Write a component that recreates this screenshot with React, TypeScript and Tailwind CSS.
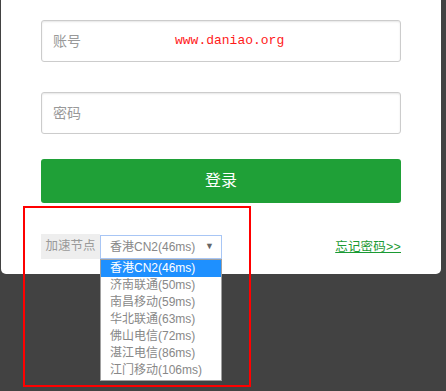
const nodes = [
  '香港CN2(46ms)',
  '济南联通(50ms)',
  '南昌移动(59ms)',
  '华北联通(63ms)',
  '佛山电信(72ms)',
  '湛江电信(86ms)',
  '江门移动(106ms)',
];

const font = { fontFamily: '"Liberation Sans", "Noto Sans CJK SC", sans-serif' };

const App = () => {
  return (
    <div className="relative h-[391px] w-[446px] overflow-hidden bg-[#424242]" style={font}>
      <div className="ml-[1px] w-[440px] rounded-b-[5px] bg-white px-[40px] pt-[20px] pb-[15px]">
        <div className="flex h-[42px] items-center rounded-[3px] border border-[#ccc] pl-[11px] shadow-[inset_0_1px_2px_rgba(0,0,0,0.1)]">
          <span className="w-[122px] text-[14px] text-[#999]">账号</span>
          <span className="text-[13px] text-[#ff1a1a]" style={{ fontFamily: '"Liberation Mono", monospace' }}>
            www.daniao.org
          </span>
        </div>
        <div className="mt-[30px] flex h-[42px] items-center rounded-[3px] border border-[#ccc] pl-[11px] shadow-[inset_0_1px_2px_rgba(0,0,0,0.1)]">
          <span className="text-[14px] text-[#999]">密码</span>
        </div>
        <button className="mt-[25px] flex h-[44px] w-full items-center justify-center rounded-[3px] bg-[#1fa037] text-[16px] text-white">
          登录
        </button>
        <div className="mt-[31px] flex items-center justify-between">
          <div className="flex items-center">
            <span className="flex h-[25px] w-[59px] items-center justify-center bg-[#eee] text-[12.5px] text-[#999]">加速节点</span>
            <div className="flex h-[24px] w-[122px] items-center justify-between border border-[#a8c6f5] pl-[9px] pr-[7px] text-[12px] text-[#888]">
              <span>香港CN2(46ms)</span>
              <span className="text-[9px] text-[#666]">▼</span>
            </div>
          </div>
          <a className="mt-[1px] text-[12.5px] tracking-[0.2px] text-[#1a9a33] underline">忘记密码&gt;&gt;</a>
        </div>
      </div>

      <ul className="absolute left-[100px] top-[259px] w-[122px] border border-[#a0a0a0] bg-white pb-[1px] text-[12px] text-[#888]">
        {nodes.map((n, i) => (
          <li
            key={n}
            className={
              i === 0
                ? 'h-[17px] bg-[#1e90ff] pl-[9px] leading-[17px] text-white'
                : 'h-[17px] pl-[9px] leading-[17px]'
            }
          >
            {n}
          </li>
        ))}
      </ul>

      <div className="pointer-events-none absolute left-[23px] top-[206px] h-[181px] w-[228px] border-2 border-[#ff0000]" />
    </div>
  );
};

export default App;
